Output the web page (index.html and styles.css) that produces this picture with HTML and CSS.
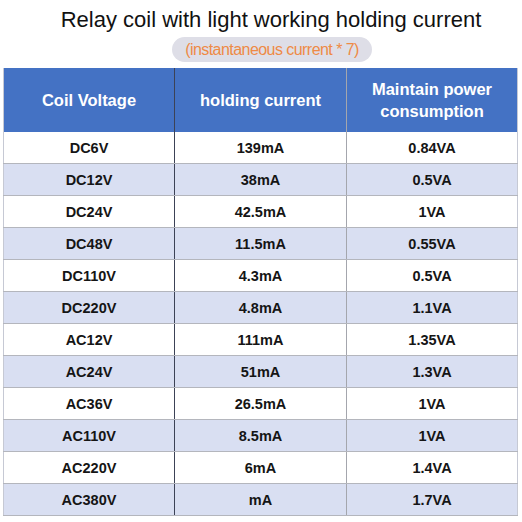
FILE: index.html
```html
<!DOCTYPE html>
<html>
<head>
<meta charset="utf-8">
<link rel="stylesheet" href="styles.css">
</head>
<body>
<div class="page">
  <h1 class="title">Relay coil with light working holding current</h1>
  <div class="pill-wrap"><span class="pill">(instantaneous current * 7)</span></div>
  <table class="grid">
    <thead>
      <tr>
        <th>Coil Voltage</th>
        <th>holding current</th>
        <th>Maintain power<br>consumption</th>
      </tr>
    </thead>
    <tbody>
      <tr><td>DC6V</td><td>139mA</td><td>0.84VA</td></tr>
      <tr><td>DC12V</td><td>38mA</td><td>0.5VA</td></tr>
      <tr><td>DC24V</td><td>42.5mA</td><td>1VA</td></tr>
      <tr><td>DC48V</td><td>11.5mA</td><td>0.55VA</td></tr>
      <tr><td>DC110V</td><td>4.3mA</td><td>0.5VA</td></tr>
      <tr><td>DC220V</td><td>4.8mA</td><td>1.1VA</td></tr>
      <tr><td>AC12V</td><td>111mA</td><td>1.35VA</td></tr>
      <tr><td>AC24V</td><td>51mA</td><td>1.3VA</td></tr>
      <tr><td>AC36V</td><td>26.5mA</td><td>1VA</td></tr>
      <tr><td>AC110V</td><td>8.5mA</td><td>1VA</td></tr>
      <tr><td>AC220V</td><td>6mA</td><td>1.4VA</td></tr>
      <tr><td>AC380V</td><td>mA</td><td>1.7VA</td></tr>
    </tbody>
  </table>
</div>
</body>
</html>
```

FILE: styles.css
```css
html, body {
  margin: 0;
  padding: 0;
  background: #ffffff;
}

.page {
  width: 522px;
  font-family: "Liberation Sans", Arial, sans-serif;
  padding-top: 7px;
}

.title {
  margin: 0;
  font-size: 22px;
  font-weight: normal;
  line-height: 26px;
  color: #111111;
  text-align: center;
  padding-left: 20px;
}

.pill-wrap {
  display: flex;
  justify-content: center;
  margin-top: 4px;
  padding-left: 22px;
}

.pill {
  display: inline-flex;
  align-items: center;
  justify-content: center;
  width: 200px;
  height: 25px;
  border-radius: 13px;
  background: #dedee7;
  color: #ee8a45;
  font-size: 16px;
  letter-spacing: -0.55px;
}

.grid {
  margin-top: 6px;
  margin-left: 3px;
  width: 515px;
  border-collapse: collapse;
  table-layout: fixed;
}

.grid th,
.grid td {
  text-align: center;
  padding: 0;
}

.grid th {
  height: 64px;
  background: #4472c4;
  color: #ffffff;
  font-size: 16.5px;
  font-weight: bold;
  line-height: 22px;
  border-left: 1px solid #c6c9d4;
  border-right: 1px solid #c6c9d4;
}

.grid th:nth-child(1) { width: 170px; }
.grid th:nth-child(2) { width: 171px; }

.grid td {
  height: 31px;
  font-size: 14.5px;
  font-weight: bold;
  color: #151515;
  border-bottom: 1px solid #b4b6bd;
  border-left: 1px solid #c6c9d4;
  border-right: 1px solid #c6c9d4;
}

.grid th:nth-child(1),
.grid td:nth-child(1) {
  border-right: 1px solid #3c4256;
}

.grid th:nth-child(2),
.grid td:nth-child(2) {
  border-right: 1px solid #a4a6ad;
}

.grid tbody tr:nth-child(even) td {
  background: #d9dff2;
}
```
